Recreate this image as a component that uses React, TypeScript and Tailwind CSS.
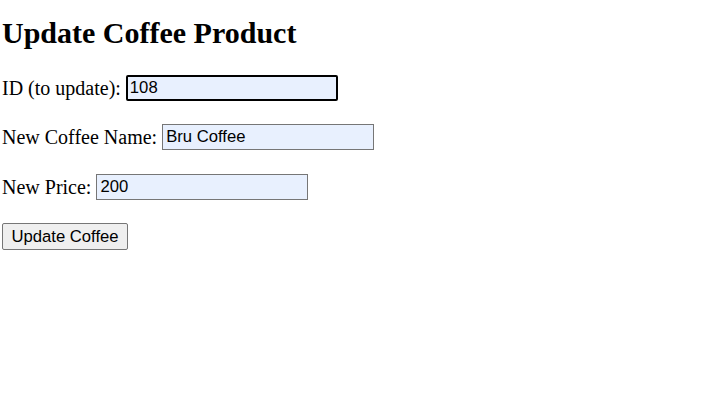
import React from "react";

export default function App() {
  const serif = { fontFamily: '"Liberation Serif", "Times New Roman", serif' };
  return (
    <div className="min-h-[417px] w-[707px] bg-white pl-[2px] pt-[16px] text-black" style={serif}>
      <h2 className="text-[30px] font-bold leading-[34px] [font-family:'Liberation_Serif',serif]">Update Coffee Product</h2>
      <div className="mt-[25px] flex h-[26px] items-center gap-[5px] text-[20px] leading-[23px] [font-family:'Liberation_Serif',serif]">
        <span>ID (to update):</span>
        <input
          defaultValue="108"
          className="h-[26px] w-[212px] rounded-[2px] border-2 border-black bg-[#e8f0fe] px-[2px] text-[16.67px] outline-none [font-family:'Liberation_Sans',Arial,sans-serif]"
        />
      </div>
      <div className="mt-[23px] flex h-[26px] items-center gap-[5px] text-[20px] leading-[23px] [font-family:'Liberation_Serif',serif]">
        <span>New Coffee Name:</span>
        <input
          defaultValue="Bru Coffee"
          className="h-[26px] w-[212px] border border-[#767676] bg-[#e8f0fe] px-[3px] text-[16.67px] outline-none [font-family:'Liberation_Sans',Arial,sans-serif]"
        />
      </div>
      <div className="mt-[24px] flex h-[26px] items-center gap-[5px] text-[20px] leading-[23px] [font-family:'Liberation_Serif',serif]">
        <span>New Price:</span>
        <input
          defaultValue="200"
          className="h-[26px] w-[212px] border border-[#767676] bg-[#e8f0fe] px-[3px] text-[16.67px] outline-none [font-family:'Liberation_Sans',Arial,sans-serif]"
        />
      </div>
      <div className="mt-[23px]">
        <button className="h-[27px] w-[126px] rounded-[2px] border border-[#767676] bg-[#efefef] text-[16.67px] leading-[20px] [font-family:'Liberation_Sans',Arial,sans-serif]">
          Update Coffee
        </button>
      </div>
    </div>
  );
}
